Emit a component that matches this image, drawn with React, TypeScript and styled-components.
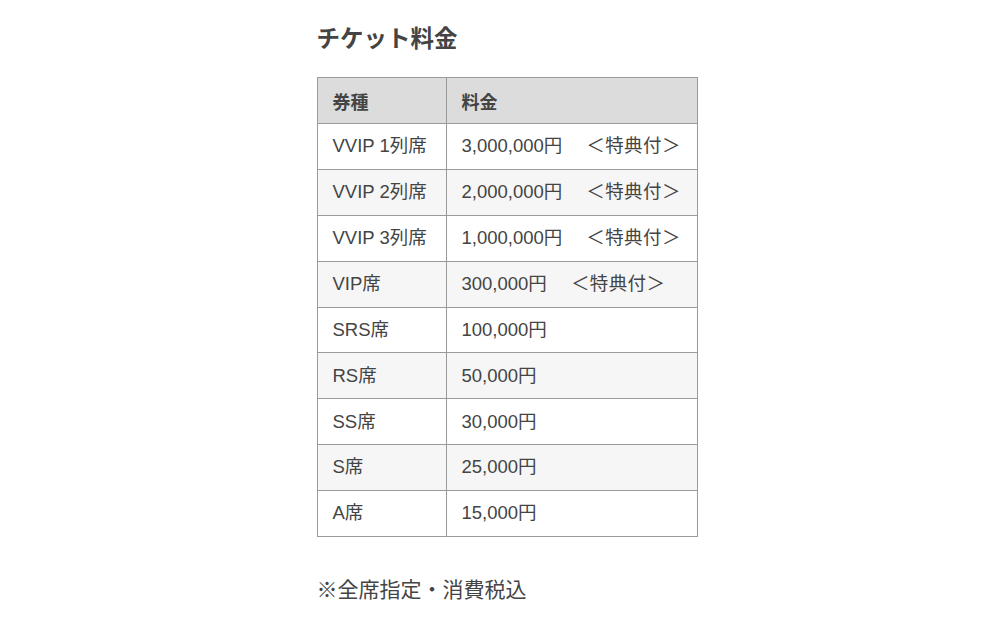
import React from 'react';
import styled, { createGlobalStyle } from 'styled-components';

const GlobalStyle = createGlobalStyle`
  html, body {
    margin: 0;
    padding: 0;
    background: #fff;
  }
  body {
    font-family: 'Liberation Sans', 'Noto Sans CJK JP', sans-serif;
    color: #444;
  }
`;

interface Ticket {
  seat: string;
  price: string;
  bonus?: boolean;
}

const tickets: Ticket[] = [
  { seat: 'VVIP 1列席', price: '3,000,000円', bonus: true },
  { seat: 'VVIP 2列席', price: '2,000,000円', bonus: true },
  { seat: 'VVIP 3列席', price: '1,000,000円', bonus: true },
  { seat: 'VIP席', price: '300,000円', bonus: true },
  { seat: 'SRS席', price: '100,000円' },
  { seat: 'RS席', price: '50,000円' },
  { seat: 'SS席', price: '30,000円' },
  { seat: 'S席', price: '25,000円' },
  { seat: 'A席', price: '15,000円' },
];

export default function App() {
  return (
    <>
      <GlobalStyle />
      <Page>
        <Section>
          <Title>チケット料金</Title>
          <PriceTable>
            <thead>
              <tr>
                <HeadCell $first>券種</HeadCell>
                <HeadCell>料金</HeadCell>
              </tr>
            </thead>
            <tbody>
              {tickets.map((t) => (
                <Row key={t.seat}>
                  <Cell $first>{t.seat}</Cell>
                  <Cell>
                    {t.price}
                    {t.bonus && <Bonus>＜特典付＞</Bonus>}
                  </Cell>
                </Row>
              ))}
            </tbody>
          </PriceTable>
          <Note>※全席指定・消費税込</Note>
        </Section>
      </Page>
    </>
  );
}

const Page = styled.div`
  display: flex;
  justify-content: center;
  padding-top: 19px;
`;

const Section = styled.section`
  width: 381px;
  margin-left: 14px;
`;

const Title = styled.h2`
  margin: 0 0 22px;
  font-family: 'Noto Sans CJK JP', sans-serif;
  font-size: 23.5px;
  line-height: 36px;
  font-weight: 700;
  color: #444;
`;

const PriceTable = styled.table`
  width: 381px;
  border-collapse: collapse;
  font-size: 18.5px;
  color: #444;
`;

const HeadCell = styled.th<{ $first?: boolean }>`
  width: ${({ $first }) => ($first ? '129px' : 'auto')};
  height: 46px;
  padding: 0 15px;
  box-sizing: border-box;
  background: #dcdcdc;
  border: 1px solid #9a9a9a;
  text-align: left;
  font-size: 18px;
  font-weight: 700;
  vertical-align: middle;
`;

const Row = styled.tr`
  &:nth-child(even) {
    background: #f6f6f6;
  }
`;

const Cell = styled.td<{ $first?: boolean }>`
  width: ${({ $first }) => ($first ? '129px' : 'auto')};
  height: 45.9px;
  padding: 0 15px;
  box-sizing: border-box;
  border: 1px solid #9a9a9a;
  white-space: nowrap;
  vertical-align: middle;
  line-height: 1;
`;

const Bonus = styled.span`
  margin-left: 24px;
  letter-spacing: 0.4px;
`;

const Note = styled.p`
  margin: 36px 0 0;
  font-family: 'Noto Sans CJK JP', sans-serif;
  font-size: 21px;
  line-height: 30px;
  color: #444;
`;
